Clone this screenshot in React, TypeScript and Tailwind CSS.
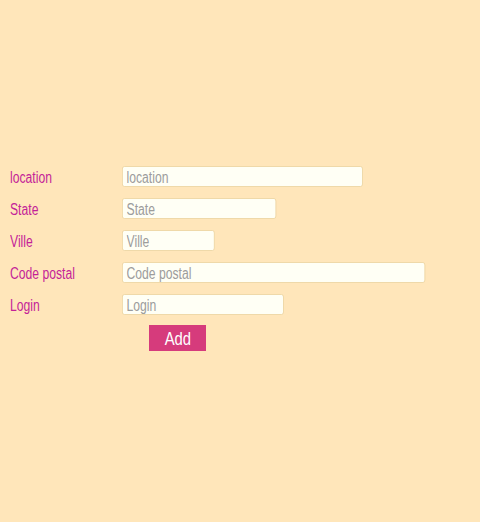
const fields = [
  { label: "location", box: "w-[241px]", input: "w-[317px]" },
  { label: "State", box: "w-[154px]", input: "w-[203px]" },
  { label: "Ville", box: "w-[93px]", input: "w-[122px]" },
  { label: "Code postal", box: "w-[303px]", input: "w-[399px]" },
  { label: "Login", box: "w-[162px]", input: "w-[213px]" }
];

// the page uses a narrow face; Liberation Sans squeezed horizontally stands in for it
export default function App() {
  return (
    <div
      className="min-h-[522px] w-full overflow-hidden bg-[#FFE6BA] px-[10px] pt-[166px]"
      style={{ fontFamily: '"Liberation Sans", Arial, sans-serif' }}
    >
      <form className="flex flex-col gap-[11px]">
        {fields.map(f => (
          <div key={f.label} className="flex h-[21px] items-center">
            <label className="w-[112px] shrink-0 text-[16px] leading-[21px] text-[#C41F98]">
              <span className="inline-block origin-left scale-x-[0.76] whitespace-nowrap pt-[2px]">
                {f.label}
              </span>
            </label>
            <div className={`${f.box} h-[21px] shrink-0`}>
              <input
                placeholder={f.label}
                className={`${f.input} block h-[21px] origin-left scale-x-[0.76] rounded-[3px] border border-[#EDD5A2] bg-[#FFFFF5] px-[5px] pt-[2px] text-[16px] text-[#555] outline-none placeholder:text-[#9C9C9C]`}
              />
            </div>
          </div>
        ))}
        <div className="-mt-[1px] flex pl-[139px]">
          <button
            type="button"
            className="h-[26px] w-[57px] bg-[#D63B7C] text-white"
          >
            <span className="inline-block scale-x-[0.78] pt-[2px] text-[19px] leading-[24px]">Add</span>
          </button>
        </div>
      </form>
    </div>
  );
}
